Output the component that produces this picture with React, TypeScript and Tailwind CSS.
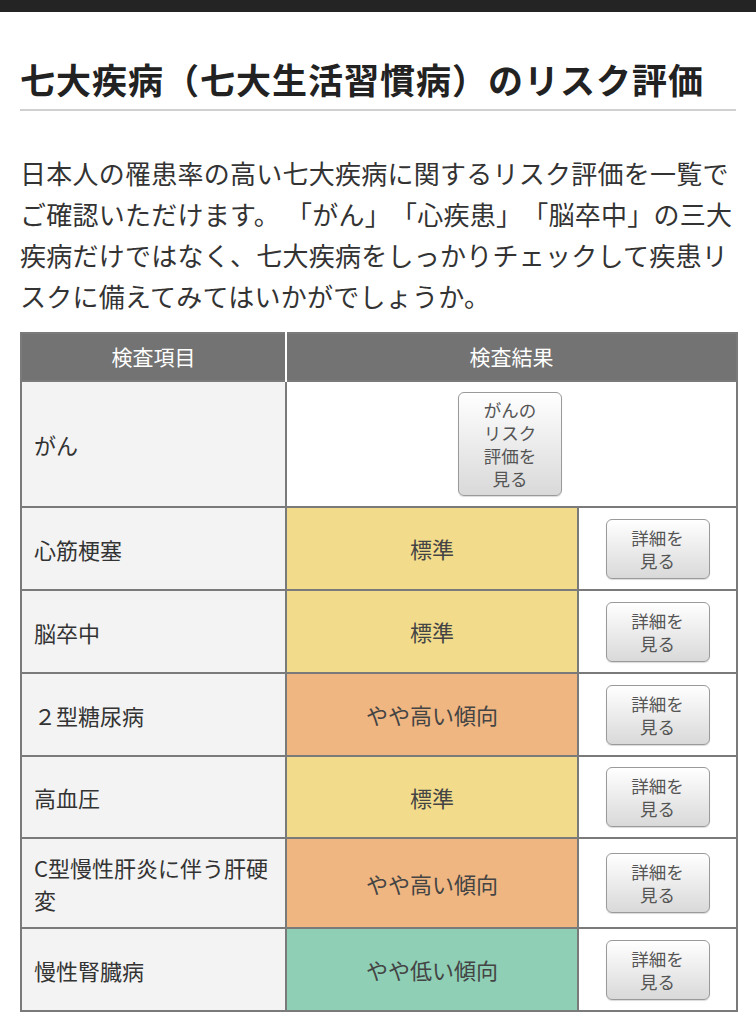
import React from "react";

const font = { fontFamily: '"Noto Sans CJK JP", "Noto Sans", sans-serif' };

function DetailButton() {
  return (
    <div className="mx-auto flex h-[60px] w-[104px] flex-col items-center justify-center rounded-[6px] border border-[#9a9a9a] bg-gradient-to-b from-[#ffffff] to-[#d9d9d9] text-[17.5px] leading-[23px] text-[#555] shadow-[0_1px_1px_rgba(0,0,0,0.15)]">
      <span>詳細を</span>
      <span>見る</span>
    </div>
  );
}

type Row = { name: string; result: string; color: string; h: string };

const rows: Row[] = [
  { name: "心筋梗塞", result: "標準", color: "bg-[#f2dc8b]", h: "h-[83px]" },
  { name: "脳卒中", result: "標準", color: "bg-[#f2dc8b]", h: "h-[83px]" },
  { name: "２型糖尿病", result: "やや高い傾向", color: "bg-[#efb681]", h: "h-[83px]" },
  { name: "高血圧", result: "標準", color: "bg-[#f2dc8b]", h: "h-[82px]" },
  { name: "C型慢性肝炎に伴う肝硬変", result: "やや高い傾向", color: "bg-[#efb681]", h: "h-[90px]" },
  { name: "慢性腎臓病", result: "やや低い傾向", color: "bg-[#8ecfb6]", h: "h-[83px]" },
];

export default function App() {
  return (
    <div className="min-h-[1024px] w-[756px] bg-white [text-spacing-trim:space-all]" style={font}>
      <div className="h-[12px] bg-[#242424]" />
      <div className="px-[20px]">
        <h1 className="mt-[44px] whitespace-nowrap border-b-2 border-[#d0d0d0] pb-[7px] text-[35px] font-bold leading-[46px] tracking-[1px] text-[#222]">
          七大疾病（七大生活習慣病）のリスク評価
        </h1>
        <p className="mt-[41px] whitespace-nowrap text-[26px] leading-[41px] tracking-[0.25px] text-[#333]">
          日本人の罹患率の高い七大疾病に関するリスク評価を一覧で
          <br />
          ご確認いただけます。 「がん」「心疾患」「脳卒中」の三大
          <br />
          疾病だけではなく、七大疾病をしっかりチェックして疾患リ
          <br />
          スクに備えてみてはいかがでしょうか。
        </p>
        <table className="mt-[16px] w-[716px] table-fixed border-collapse border-2 border-[#7a7a7a]">
          <colgroup>
            <col className="w-[265px]" />
            <col className="w-[292px]" />
            <col className="w-[159px]" />
          </colgroup>
          <thead>
            <tr className="h-[48px] bg-[#737373] text-[21px] text-white">
              <th className="border-r-2 border-white font-normal">検査項目</th>
              <th colSpan={2} className="font-normal">検査結果</th>
            </tr>
          </thead>
          <tbody>
            <tr className="h-[126px]">
              <td className="border-2 border-[#7a7a7a] bg-[#f3f3f3] px-[12px] text-[22px] text-[#333]">がん</td>
              <td colSpan={2} className="border-2 border-[#7a7a7a] bg-white">
                <div className="ml-[171px] flex h-[104px] w-[104px] flex-col items-center justify-center rounded-[6px] border border-[#9a9a9a] bg-gradient-to-b from-[#ffffff] to-[#d9d9d9] text-[17.5px] leading-[23px] text-[#555] shadow-[0_1px_1px_rgba(0,0,0,0.15)]">
                  <span>がんの</span>
                  <span>リスク</span>
                  <span>評価を</span>
                  <span>見る</span>
                </div>
              </td>
            </tr>
            {rows.map((r) => (
              <tr key={r.name} className={r.h}>
                <td className="border-2 border-[#7a7a7a] bg-[#f3f3f3] px-[12px] text-[22px] leading-[32px] text-[#333]">
                  {r.name}
                </td>
                <td className={`border-2 border-[#7a7a7a] ${r.color} text-center text-[22px] text-[#444]`}>
                  {r.result}
                </td>
                <td className="border-2 border-[#7a7a7a] bg-white">
                  <DetailButton />
                </td>
              </tr>
            ))}
          </tbody>
        </table>
      </div>
    </div>
  );
}
